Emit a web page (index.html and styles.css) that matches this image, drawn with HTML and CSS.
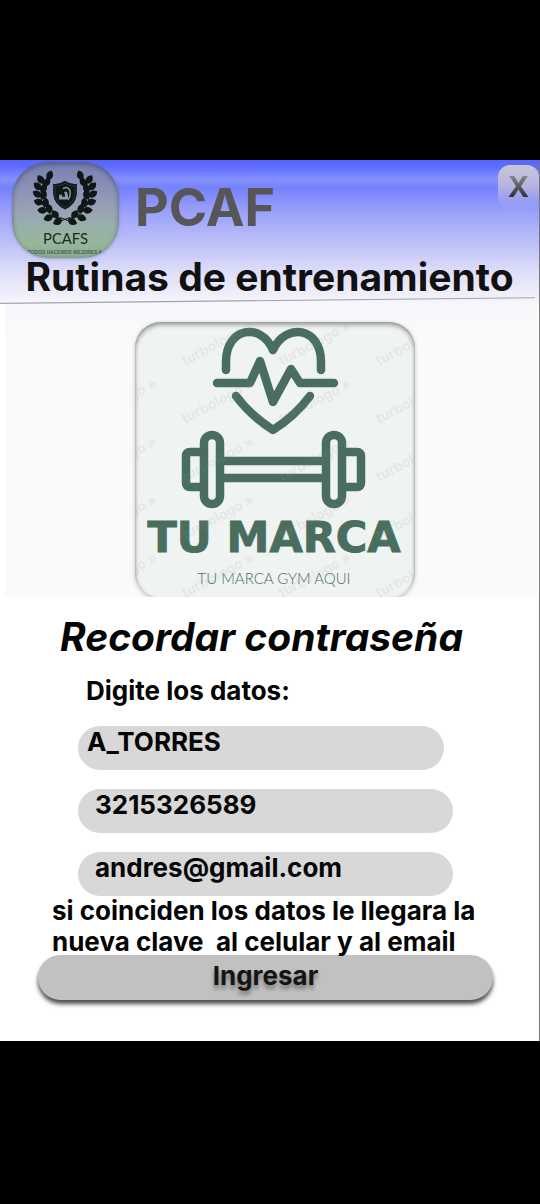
FILE: index.html
```html
<!DOCTYPE html>
<html lang="es">
<head>
<meta charset="utf-8">
<meta name="viewport" content="width=device-width, initial-scale=1">
<title>PCAF</title>
<link rel="stylesheet" href="styles.css">
</head>
<body>
<main class="screen">
  <header class="header">
    <div class="topbar">
      <svg class="crest" viewBox="0 0 107 97" role="img" aria-label="PCAFS">
        <defs>
          <path id="leaf" d="M0 0C-5-2-5-7-1-10C4-7 4-3 0 0Z"/>
          <g id="branch">
            <path d="M49 57C34 54 27 42 29 29Q30 20 37 13" fill="none" stroke="#101719"/>
            <use href="#leaf" transform="translate(36 18) rotate(25)"/>
            <use href="#leaf" transform="translate(31 22) rotate(-25)"/>
            <use href="#leaf" transform="translate(31 24) rotate(50)"/>
            <use href="#leaf" transform="translate(29 28) rotate(-40)"/>
            <use href="#leaf" transform="translate(29 31) rotate(35)"/>
            <use href="#leaf" transform="translate(29 35) rotate(-52)"/>
            <use href="#leaf" transform="translate(30 38) rotate(22)"/>
            <use href="#leaf" transform="translate(31 42) rotate(-66)"/>
            <use href="#leaf" transform="translate(33 46) rotate(10)"/>
            <use href="#leaf" transform="translate(35 49) rotate(-82)"/>
            <use href="#leaf" transform="translate(38 52) rotate(-6)"/>
            <use href="#leaf" transform="translate(41 55) rotate(-100)"/>
            <use href="#leaf" transform="translate(46 57) rotate(-30)"/>
            <use href="#leaf" transform="translate(50 58) rotate(-110)"/>
          </g>
        </defs>
        <g fill="#101719">
          <use href="#branch"/>
          <use href="#branch" transform="translate(106 0) scale(-1 1)"/>
          <path d="M48 60L58 56M58 60L48 56" stroke="#101719"/>
          <path d="M53 19Q59 23 65 22V32Q64 43 53 48Q42 43 41 32V22Q47 23 53 19Z"/>
        </g>
        <path d="M53 21.500Q58 25 63 24V32Q62 41 53 46Q44 41 43 32V24Q48 25 53 21.500Z" fill="none" stroke="#37434a" stroke-width=".7"/>
        <path d="M51 27Q56 24 58 29Q59 35 56 38" fill="none" stroke="#8a9ba5" stroke-width="1.500"/>
        <path d="M47 33H50V35H53V33L52 30H55L56 34V38H47Z" fill="#8a9ba5"/>
        <text class="crest-name" x="53.500" y="83">PCAFS</text>
        <text class="crest-motto" x="53" y="93">TODOS HACEMOS MEJORES A</text>
      </svg>
      <h1 class="brand">PCAF</h1>
      <button class="close" type="button" aria-label="Cerrar"><span class="close-mark">X</span></button>
    </div>
    <p class="tagline">Rutinas de entrenamiento</p>
    <svg class="rule" viewBox="0 0 540 7" preserveAspectRatio="none" aria-hidden="true"><path d="M0 6.500L536 1.500" stroke="#a3a3a8" fill="none"/></svg>
  </header>

  <section class="banner">
    <div class="card">
      <svg class="card-art" viewBox="0 0 280 280" role="img" aria-label="Tu marca gym aquí">
        <defs>
          <pattern id="marks" x="41" y="-11" width="97" height="58" patternUnits="userSpaceOnUse">
            <g class="mark">
              <text transform="translate(9 55) rotate(-28)">turbologo »</text>
              <text transform="translate(9 113) rotate(-28)">turbologo »</text>
            </g>
          </pattern>
        </defs>
        <g fill="none" stroke="#496e5f" stroke-width="8.500" stroke-linecap="round" stroke-linejoin="round">
          <path d="M91 48V40C91 5 126 0 138 28C151 0 186 5 186 40V48"/>
          <path d="M82 61H115L125 39L138 80L156 47L165 61H199"/>
          <path d="M101 74Q116 94 138 108Q160 94 175 74"/>
          <rect x="69" y="113" width="16" height="69" rx="8"/>
          <rect x="191" y="113" width="16" height="69" rx="8"/>
          <path d="M65 130H55Q51 130 51 134V161Q51 165 55 165H65M211 130H222Q226 130 226 134V161Q226 165 222 165H211"/>
          <path stroke-linecap="butt" d="M89 139H187M89 156H187"/>
        </g>
        <text class="card-name" x="139" y="230">TU MARCA</text>
        <text class="card-sub" x="139" y="262">TU MARCA GYM AQUI</text>
        <rect width="280" height="280" fill="url(#marks)"/>
      </svg>
    </div>
  </section>

  <form class="form">
    <h2 class="form-title">Recordar contraseña</h2>
    <p class="form-hint">Digite los datos:</p>
    <div class="fields">
      <input class="field field-user" type="text" value="A_TORRES" aria-label="Usuario">
      <input class="field" type="tel" value="3215326589" aria-label="Celular">
      <input class="field" type="email" value="andres@gmail.com" aria-label="Email">
    </div>
    <p class="note">si coinciden los datos le llegara la<br>nueva clave&nbsp; al celular y al email</p>
    <button class="submit" type="button">Ingresar</button>
  </form>
</main>
</body>
</html>
```
FILE: styles.css
```css
* { box-sizing: border-box; }

body {
  margin: 0;
  padding: 160px 0;
  background: #000;
  color: #050505;
  font-family: Inter, "Liberation Sans", sans-serif;
  font-weight: 700;
}

h1, h2, p { margin: 0; }

.screen {
  background: #fff;
  border-right: 1px solid #777;
  padding-bottom: 41px;
}

.header {
  background: linear-gradient(#5765ff 0, #5f6dff 7px, #8591fb 19px, #7481fc 28px, #989ffa 50px, #c2c5f8 88px, #dedef9 112px, #f0f0fb 136px, #f6f8fc 144px);
}

.topbar {
  display: flex;
  align-items: flex-start;
  padding: 2px 0 0 12px;
}

.crest {
  width: 107px;
  height: 96px;
  border-radius: 36px;
  background: linear-gradient(#767eb2 0, #8990b5 25%, #98a2b5 50%, #98b0a8 68%, #96b79a 85%, #8dab93 100%);
  box-shadow: inset 0 2px 5px #3d4268aa, 0 1px 3px #5d668f66;
}

.crest-name {
  font: 400 15px Lato, sans-serif;
  text-anchor: middle;
  fill: #1c2a25;
}

.crest-motto {
  font: 700 5px "Liberation Sans", sans-serif;
  text-anchor: middle;
  fill: #4a6152;
}

.brand {
  margin: 20px 0 0 16px;
  color: #565656;
  font-size: 52px;
  line-height: 52px;
}

.close {
  width: 41px;
  height: 44px;
  margin: 3px 0 0 auto;
  padding: 0;
  border: 0;
  border-radius: 12px;
  background: linear-gradient(#cbc5d8, #b4b3e2 50%, #a5aaf600);
  font: inherit;
}

.close-mark {
  background: linear-gradient(#888 20%, #303030 80%);
  background-clip: text;
  color: transparent;
  font-size: 29px;
  line-height: 40px;
}

.tagline {
  color: #111;
  font-size: 39px;
  line-height: 38px;
  text-align: center;
}

.rule {
  display: block;
  width: 100%;
  height: 8px;
}

.banner {
  display: flex;
  justify-content: center;
  height: 293px;
  padding: 18px 0 0 8px;
  margin: 0 2px 0 5px;
  overflow: hidden;
  background: linear-gradient(#f6f8fc, #fafafa 36px);
}

.card {
  width: 280px;
  height: 277px;
  border-radius: 26px;
  overflow: hidden;
  background: #eff3f1;
  box-shadow: inset 0 3px 4px #777a, inset 0 0 3px #8888, 0 1px 4px #7776;
}

.card-art { display: block; width: 100%; }

.card-name {
  font: 700 43px "DejaVu Sans", sans-serif;
  text-anchor: middle;
  fill: #496e5f;
  stroke: #496e5f;
}

.card-sub {
  font: 300 15px Lato, sans-serif;
  text-anchor: middle;
  fill: #496e5f;
}

.mark {
  font: 700 14px Inter, sans-serif;
  fill: #8a9490;
  fill-opacity: .12;
}

.form { padding: 16px 46px 0 38px; }

.form-title {
  padding-left: 22px;
  font-size: 39px;
  font-style: italic;
  line-height: 48px;
}

.form-hint {
  padding: 14px 0 19px 48px;
  font-size: 26px;
  line-height: 32px;
}

.fields {
  display: flex;
  flex-direction: column;
  gap: 19px;
  padding: 0 40px;
}

.field {
  width: 100%;
  height: 44px;
  padding: 0 17px 14px;
  border: 0;
  border-radius: 22px;
  background: #d8d8d8;
  color: inherit;
  font: inherit;
  font-size: 26px;
}

.field-user {
  width: calc(100% - 9px);
  padding-left: 9px;
}

.note {
  margin: -1px 0 -2px;
  padding-left: 14px;
  font-size: 26px;
  line-height: 31px;
  white-space: nowrap;
}

.submit {
  display: block;
  width: 100%;
  height: 45px;
  padding: 0 0 4px;
  border: 0;
  border-radius: 23px;
  background: #c1c1c1;
  box-shadow: 0 4px 4px #222c;
  color: #151515;
  font: inherit;
  font-size: 26px;
  text-shadow: 0 4px 4px #0006;
}
```
